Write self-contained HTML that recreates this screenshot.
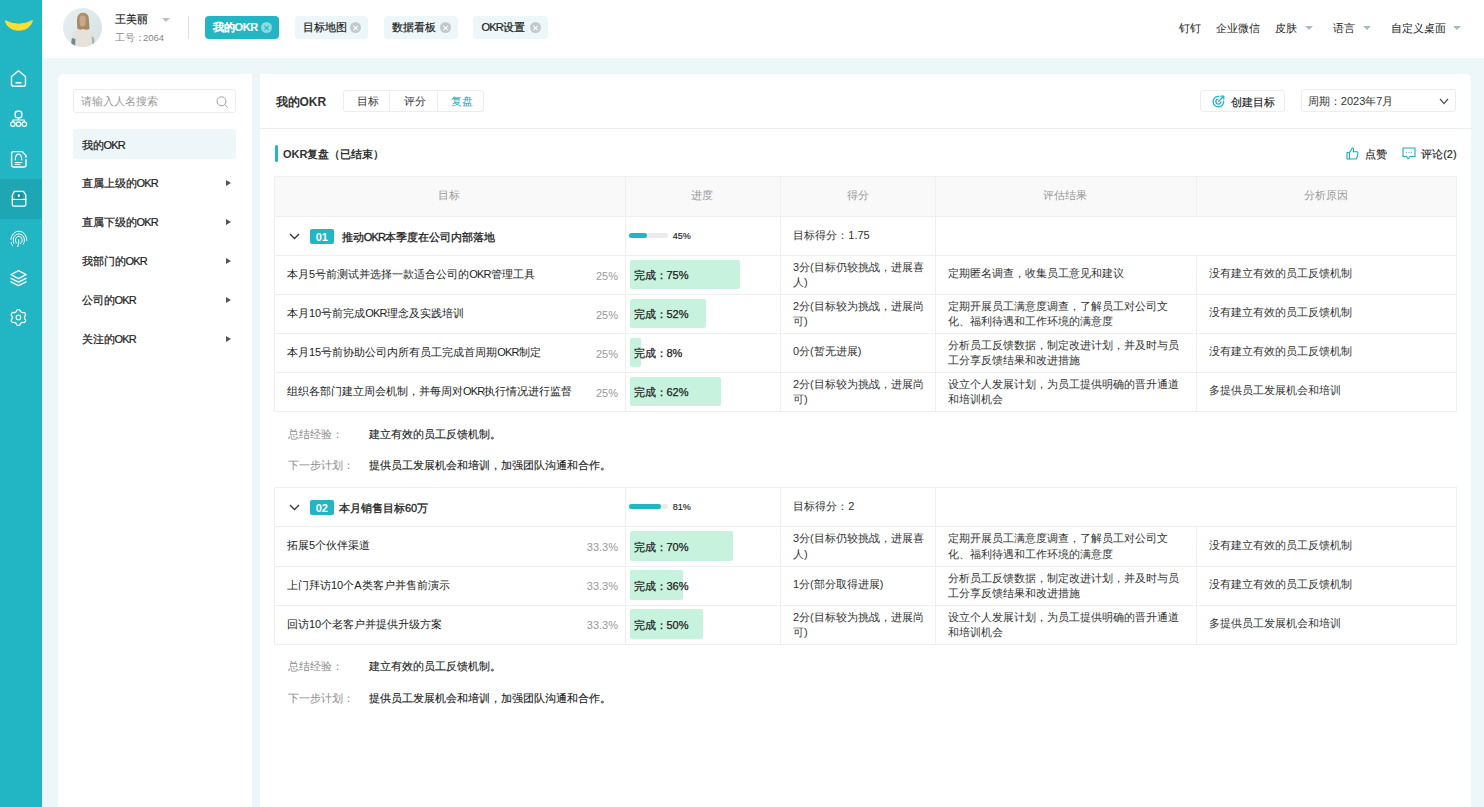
<!DOCTYPE html>
<html><head><meta charset="utf-8">
<style>
*{box-sizing:border-box;margin:0;padding:0}
html,body{width:1484px;height:807px;overflow:hidden}
body{position:relative;background:#edf6f8;font-family:"Liberation Sans",sans-serif;font-size:11px;color:#333}
.a{position:absolute;white-space:nowrap}
#side{position:absolute;left:0;top:0;width:42px;height:807px;background:#22b5c4}
#side .act{position:absolute;left:0;top:179px;width:42px;height:40px;background:#1fa6b4}
#side svg{position:absolute}
#hdr{position:absolute;left:42px;top:0;width:1442px;height:58px;background:#fff}
.tab{position:absolute;top:16px;height:23px;border-radius:4px;background:#edf6f8;color:#222;-webkit-text-stroke:0.2px #222;font-size:11px;line-height:23px}
.tab.on{background:#22b5c4;color:#fff;font-weight:bold;-webkit-text-stroke:0.1px #fff}
.tab .x{position:absolute;top:6px;width:11px;height:11px;border-radius:50%;background:#c4c9cb}
.tab.on .x{background:#8fd9e0}
.tab .x:before,.tab .x:after{content:"";position:absolute;left:5px;top:2.5px;width:1.2px;height:6px;background:#fff;transform:rotate(45deg)}
.tab .x:after{transform:rotate(-45deg)}
.tab.on .x:before,.tab.on .x:after{background:#22b5c4}
.tri{position:absolute;width:0;height:0;border-left:4px solid transparent;border-right:4px solid transparent;border-top:4.5px solid #a8bcbf}
#lp{position:absolute;left:57.7px;top:73.6px;width:194.3px;height:760px;background:#fff;border-radius:5px 0 0 0}
#mp{position:absolute;left:259.7px;top:73.6px;width:1211.6px;height:760px;background:#fff;border-radius:0 5px 0 0}
.menu{position:absolute;left:81.5px;font-size:11px;color:#333}
.rarr{position:absolute;left:226px;width:0;height:0;border-top:3.5px solid transparent;border-bottom:3.5px solid transparent;border-left:5px solid #555}
.ln{position:absolute;background:#efefef}
.hd{position:absolute;color:#999;font-size:11px;text-align:center}
.g{position:absolute;background:#c6f2de;border-radius:2px}
.t{position:absolute;white-space:nowrap;font-size:11px;color:#222;line-height:15.3px;}
.w{position:absolute;color:#999;font-size:11px;text-align:right;white-space:nowrap}
.badge{position:absolute;left:310px;width:23.5px;height:15.3px;background:#22b5c4;color:#fff;font-weight:bold;font-size:11px;line-height:17px;text-align:center;border-radius:2px}
.chev{position:absolute;left:288.8px}
.track{position:absolute;left:629px;width:39px;height:5px;border-radius:3px;background:#ebebeb}
.track i{position:absolute;left:0;top:0;height:5px;border-radius:3px;background:#22b5c4}
.sumk{position:absolute;left:287.5px;color:#8c8c8c;font-size:11px;white-space:nowrap}
.sumv{position:absolute;left:368.5px;color:#222;-webkit-text-stroke:0.12px #222;font-size:11px;white-space:nowrap}
</style></head><body>
<div id="side"><div class="act"></div><svg style="left:0;top:0" width="42" height="340" viewBox="0 0 42 340">
<path d="M5.3 20.8 Q18.7 27.8 32.4 20.5 C30.8 27.3 25 30.2 18.7 30.2 C12.5 30.2 7 27.3 5.3 20.8Z" fill="#fde02f" stroke="#fde02f" stroke-width="1" stroke-linejoin="round"/>
<g fill="none" stroke="#fff" stroke-width="1.4" stroke-linejoin="round" stroke-linecap="round">
<path d="M11.5 76.5 L18.5 70.7 L25.5 76.5 V84.3 Q25.5 86.3 23.5 86.3 H13.5 Q11.5 86.3 11.5 84.3Z"/>
<path d="M16 82.8 H21"/>
<rect x="15.2" y="111.2" width="6.6" height="6.6" rx="2.2"/>
<path d="M18.5 117.8 V120 M12.9 121.8 V120 H24.3 V121.8" stroke-width="1.2"/>
<circle cx="12.9" cy="124.1" r="2.3" stroke-width="1.2"/><circle cx="18.6" cy="124.1" r="2.3" stroke-width="1.2"/><circle cx="24.3" cy="124.1" r="2.3" stroke-width="1.2"/>
<path d="M26 159.8 V165.3 Q26 167 24.3 167 H13.3 Q11.6 167 11.6 165.3 V153.3 Q11.6 151.6 13.3 151.6 H22.3 L26 155.8 V157.3"/>
<path d="M15.3 159.8 Q15.5 154.2 18.5 154.2 Q21.5 154.2 21.8 159.8" stroke-width="1.2"/>
<path d="M15.2 162.5 H21.8 M15.2 164.3 H20" stroke-width="1"/>
<path d="M14.4 191.4 H23.5 L25.8 195 V204.6 Q25.8 206.2 24.2 206.2 H13.9 Q12.3 206.2 12.3 204.6 V195Z" stroke-width="1.3"/>
<path d="M12.3 199.4 H25.8" stroke-width="1.3"/>
<rect x="15.2" y="193.1" width="7.5" height="5.6" fill="#178f9b" stroke="none"/>
<ellipse cx="18.8" cy="195.6" rx="1.15" ry="1.7" fill="#fff" stroke="none"/>
<path d="M10.83 239.43 A8.00 8.80 0 0 1 26.80 240.51" stroke-width="1.0"/>
<path d="M13.86 243.33 A5.70 6.27 0 1 1 23.17 244.23" stroke-width="1.0"/>
<path d="M16.85 243.40 A3.40 3.91 0 1 1 20.24 243.74" stroke-width="1.0"/>
<path d="M12.67 245.86 A8.00 8.80 0 0 1 11.07 242.48" stroke-width="1.0"/>
<path d="M18.8 239.8 Q19.2 243.5 17.8 246.6" stroke-width="1"/>
<path d="M18.5 270.6 L26 274.6 L18.5 278.6 L11 274.6Z" stroke-width="1.3"/>
<path d="M11 278.3 L18.5 282.2 L26 278.3" stroke-width="1.3"/>
<path d="M11 281.8 L18.5 285.6 L26 281.8" stroke-width="1.3"/>
<path d="M24.55 317.50 L24.55 317.82 L24.54 318.15 L24.57 318.48 L24.74 318.85 L25.16 319.31 L25.55 319.82 L25.63 320.28 L25.55 320.68 L25.39 321.06 L25.20 321.43 L24.98 321.77 L24.73 322.10 L24.42 322.38 L23.98 322.53 L23.35 322.45 L22.74 322.32 L22.33 322.36 L22.03 322.50 L21.75 322.66 L21.48 322.83 L21.19 322.98 L20.91 323.14 L20.64 323.34 L20.40 323.67 L20.21 324.26 L19.96 324.85 L19.61 325.15 L19.22 325.28 L18.81 325.33 L18.40 325.35 L17.99 325.33 L17.58 325.28 L17.19 325.15 L16.84 324.85 L16.59 324.26 L16.40 323.67 L16.16 323.34 L15.89 323.14 L15.61 322.98 L15.32 322.83 L15.05 322.66 L14.77 322.50 L14.47 322.36 L14.06 322.32 L13.45 322.45 L12.82 322.53 L12.38 322.38 L12.07 322.10 L11.82 321.77 L11.60 321.43 L11.41 321.06 L11.25 320.68 L11.17 320.28 L11.25 319.82 L11.64 319.31 L12.06 318.85 L12.23 318.48 L12.26 318.15 L12.25 317.82 L12.25 317.50 L12.25 317.18 L12.26 316.85 L12.23 316.52 L12.06 316.15 L11.64 315.69 L11.25 315.18 L11.17 314.72 L11.25 314.32 L11.41 313.94 L11.60 313.57 L11.82 313.23 L12.07 312.90 L12.38 312.62 L12.82 312.47 L13.45 312.55 L14.06 312.68 L14.47 312.64 L14.77 312.50 L15.05 312.34 L15.32 312.17 L15.61 312.02 L15.89 311.86 L16.16 311.66 L16.40 311.33 L16.59 310.74 L16.84 310.15 L17.19 309.85 L17.58 309.72 L17.99 309.67 L18.40 309.65 L18.81 309.67 L19.22 309.72 L19.61 309.85 L19.96 310.15 L20.21 310.74 L20.40 311.33 L20.64 311.66 L20.91 311.86 L21.19 312.02 L21.48 312.17 L21.75 312.34 L22.03 312.50 L22.33 312.64 L22.74 312.68 L23.35 312.55 L23.98 312.47 L24.42 312.62 L24.73 312.90 L24.98 313.23 L25.20 313.57 L25.39 313.94 L25.55 314.32 L25.63 314.72 L25.55 315.18 L25.16 315.69 L24.74 316.15 L24.57 316.52 L24.54 316.85 L24.55 317.18Z" stroke-width="1.3"/>
<circle cx="18.4" cy="317.4" r="2.3" stroke-width="1.1"/>
</g></svg></div>
<div id="hdr"></div>
<div id="lp"></div>
<div id="mp"></div>
<svg class="a" style="left:63px;top:8px" width="39" height="39" viewBox="0 0 39 39"><defs><clipPath id="av"><circle cx="19.5" cy="19.5" r="19.5"/></clipPath><linearGradient id="bgG" x1="0" y1="0" x2="1" y2="1"><stop offset="0" stop-color="#e8eff1"/><stop offset="1" stop-color="#d6e2e6"/></linearGradient></defs><g clip-path="url(#av)"><rect width="39" height="39" fill="url(#bgG)"/><path d="M7 39 L9.5 26 Q11 22 15 21.5 L24.5 21.5 Q29 22 30 26 L32.5 39Z" fill="#e5e1db"/><path d="M7.5 39 L9 30 L12.5 31 L12 39Z" fill="#6f8b94"/><path d="M28.5 28 L31 30 L31.5 38 L29.5 36Z" fill="#9db3b9"/><path d="M14 13 Q13.5 5 20 4.8 Q26.5 5 26 13 L26.5 21 Q23 22.5 20 21 Q16.5 22.5 14.2 20.5Z" fill="#a88a60"/><path d="M16.5 10 Q17 7 20 7.2 Q22.8 7.5 22.8 11 L22.5 16.5 Q20.5 19.8 17.5 18 Q16 15 16.5 10Z" fill="#c7a78f"/><path d="M15.5 9 Q18 6 23.5 9 L23 6.5 Q20 4.5 16 6.5Z" fill="#b49465"/></g></svg>
<div class="a" style="left:114.5px;top:11px;font-size:11px;color:#222;-webkit-text-stroke:0.15px #222;line-height:16px">王美丽</div>
<div class="tri" style="left:161.5px;top:17.5px;border-top-color:#b9c0c2"></div>
<div class="a" style="left:114.5px;top:30.5px;font-size:9.5px;color:#888;line-height:14px">工号：<span style="margin-left:-1.5px">2064</span></div>
<div class="a" style="left:188px;top:15.5px;width:1px;height:23.5px;background:#dfe3e4"></div>
<div class="tab on" style="left:204.6px;width:74.1px"><span style="position:absolute;left:8px;top:0">我的<span style="letter-spacing:-0.4px">OKR</span></span><span class="x" style="left:56.1px"></span></div>
<div class="tab" style="left:294.7px;width:73.6px"><span style="position:absolute;left:8px;top:0">目标地图</span><span class="x" style="left:55.6px"></span></div>
<div class="tab" style="left:384px;width:73.7px"><span style="position:absolute;left:8px;top:0">数据看板</span><span class="x" style="left:55.7px"></span></div>
<div class="tab" style="left:473.4px;width:74.6px"><span style="position:absolute;left:8px;top:0"><span style="letter-spacing:-0.8px">OKR</span>设置</span><span class="x" style="left:56.6px"></span></div>
<div class="a" style="left:1178.5px;top:20px;font-size:11px;color:#222;line-height:16px">钉钉</div>
<div class="a" style="left:1216px;top:20px;font-size:11px;color:#222;line-height:16px">企业微信</div>
<div class="a" style="left:1274.7px;top:20px;font-size:11px;color:#222;line-height:16px">皮肤</div>
<div class="a" style="left:1332.5px;top:20px;font-size:11px;color:#222;line-height:16px">语言</div>
<div class="a" style="left:1390.7px;top:20px;font-size:11px;color:#222;line-height:16px">自定义桌面</div>
<div class="tri" style="left:1305.4px;top:25.5px"></div>
<div class="tri" style="left:1362.6px;top:25.5px"></div>
<div class="tri" style="left:1452.5px;top:25.5px"></div>
<div class="a" style="left:73.3px;top:89.4px;width:163.2px;height:23.2px;border:1px solid #ececec;border-radius:3px;background:#fff"></div>
<div class="a" style="left:80.5px;top:93px;font-size:11px;color:#999;line-height:16px">请输入人名搜索</div>
<svg class="a" style="left:216px;top:95.5px" width="13" height="12" viewBox="0 0 13 12" fill="none" stroke="#9a9fa1" stroke-width="1"><circle cx="5.5" cy="5.3" r="4.5"/><path d="M8.8 8.6 L11.8 11.5"/></svg>
<div class="a" style="left:73.3px;top:128.5px;width:163.2px;height:30.5px;border-radius:3px;background:#edf6f8"></div>
<div class="a" style="left:81.5px;top:137px;font-size:11px;color:#222;-webkit-text-stroke:0.22px #222;line-height:16px">我的<span style="letter-spacing:-0.8px">OKR</span></div>
<div class="a" style="left:81.5px;top:175px;font-size:11px;color:#222;-webkit-text-stroke:0.22px #222;line-height:16px">直属上级的<span style="letter-spacing:-0.8px">OKR</span></div>
<div class="rarr" style="top:179.5px"></div>
<div class="a" style="left:81.5px;top:214px;font-size:11px;color:#222;-webkit-text-stroke:0.22px #222;line-height:16px">直属下级的<span style="letter-spacing:-0.8px">OKR</span></div>
<div class="rarr" style="top:218.5px"></div>
<div class="a" style="left:81.5px;top:253px;font-size:11px;color:#222;-webkit-text-stroke:0.22px #222;line-height:16px">我部门的<span style="letter-spacing:-0.8px">OKR</span></div>
<div class="rarr" style="top:257.5px"></div>
<div class="a" style="left:81.5px;top:292px;font-size:11px;color:#222;-webkit-text-stroke:0.22px #222;line-height:16px">公司的<span style="letter-spacing:-0.8px">OKR</span></div>
<div class="rarr" style="top:296.5px"></div>
<div class="a" style="left:81.5px;top:331px;font-size:11px;color:#222;-webkit-text-stroke:0.22px #222;line-height:16px">关注的<span style="letter-spacing:-0.8px">OKR</span></div>
<div class="rarr" style="top:335.5px"></div>
<div class="a" style="left:275.5px;top:93px;font-size:12px;font-weight:bold;color:#333;line-height:18px">我的OKR</div>
<div class="a" style="left:343.3px;top:89.7px;width:140.4px;height:22.6px;border:1px solid #ededed;border-radius:3px"></div>
<div class="a" style="left:389px;top:90px;width:1px;height:22px;background:#ededed"></div>
<div class="a" style="left:437px;top:90px;width:1px;height:22px;background:#ededed"></div>
<div class="a" style="left:356.5px;top:93px;font-size:11px;color:#333;line-height:16px">目标</div>
<div class="a" style="left:404px;top:93px;font-size:11px;color:#333;line-height:16px">评分</div>
<div class="a" style="left:451.3px;top:93px;font-size:11px;color:#22a9b8;line-height:16px">复盘</div>
<div class="a" style="left:1200.2px;top:89.8px;width:84.6px;height:22.4px;border:1px solid #ededed;border-radius:3px"></div>
<svg class="a" style="left:1211.5px;top:94.5px" width="13" height="13" viewBox="0 0 13 13" fill="none" stroke="#22b5c4" stroke-width="1.3"><path d="M11.6 5.6 A5.3 5.3 0 1 1 7.4 1.4"/><path d="M8.9 6.6 A2.5 2.5 0 1 1 6.4 4.1"/><path d="M6.5 6.5 L10.5 2.5 M9 1.2 L11.8 1.2 M11.8 1.2 V4" stroke-linecap="round"/></svg>
<div class="a" style="left:1230.5px;top:93.5px;font-size:11px;color:#222;line-height:16px;-webkit-text-stroke:0.15px #222">创建目标</div>
<div class="a" style="left:1301px;top:89.4px;width:154.8px;height:22.8px;border:1px solid #ededed;border-radius:3px"></div>
<div class="a" style="left:1307.8px;top:92.5px;font-size:11px;color:#333;line-height:16px">周期：2023年7月</div>
<svg class="a" style="left:1438.5px;top:98px" width="10" height="7" viewBox="0 0 10 7" fill="none" stroke="#555" stroke-width="1.2"><path d="M1 1 L5 5.5 L9 1"/></svg>
<div class="ln" style="left:259.5px;top:127.8px;width:1212px;height:1px;background:#ebeeef"></div>
<div class="a" style="left:275px;top:144.7px;width:3.3px;height:17px;border-radius:2px;background:#22b5c4"></div>
<div class="a" style="left:283px;top:146px;font-size:11px;font-weight:bold;color:#333;line-height:16px">OKR复盘（已结束）</div>
<svg class="a" style="left:1346px;top:147px" width="13" height="13" viewBox="0 0 13 13" fill="none" stroke="#22a9b8" stroke-width="1.1" stroke-linejoin="round"><path d="M1 5.5 H3.5 V12 H1Z"/><path d="M3.5 5.5 L6.2 1 Q7.8 0.8 7.6 2.5 L7.2 4.8 H11 Q12.3 5 12 6.3 L10.8 11 Q10.5 12 9.5 12 H3.5"/></svg>
<div class="a" style="left:1365px;top:146px;font-size:11px;color:#222;line-height:16px;-webkit-text-stroke:0.15px #222">点赞</div>
<svg class="a" style="left:1401.5px;top:147px" width="14" height="13" viewBox="0 0 14 13" fill="none" stroke="#22a9b8" stroke-width="1.1" stroke-linejoin="round"><path d="M1 1 H13 V9.5 H8 L6 11.8 L4.5 9.5 H1Z"/><path d="M4 5.3 H4.8 M6.6 5.3 H7.4 M9.2 5.3 H10" stroke-width="1.2"/></svg>
<div class="a" style="left:1421.2px;top:146px;font-size:11px;color:#222;line-height:16px;-webkit-text-stroke:0.15px #222">评论(2)</div>
<div class="a" style="left:274.4px;top:176px;width:1181.8px;height:40px;background:#f9f9f9"></div>
<div class="hd" style="left:274.4px;width:350.2px;top:187px;line-height:16px">目标</div>
<div class="hd" style="left:624.6px;width:155.8px;top:187px;line-height:16px">进度</div>
<div class="hd" style="left:780.4px;width:154.8px;top:187px;line-height:16px">得分</div>
<div class="hd" style="left:935.2px;width:260.6px;top:187px;line-height:16px">评估结果</div>
<div class="hd" style="left:1195.8px;width:260.4px;top:187px;line-height:16px">分析原因</div>
<div class="ln" style="left:274.4px;top:176px;width:1182.8px;height:1px;background:#efefef"></div>
<div class="ln" style="left:274.4px;top:216px;width:1182.8px;height:1px;background:#efefef"></div>
<svg class="chev" style="top:233.0px" width="11" height="7" viewBox="0 0 11 7" fill="none" stroke="#333" stroke-width="1.3"><path d="M1 1 L5.5 5.5 L10 1"/></svg>
<div class="badge" style="top:228.6px">01</div>
<div class="t" style="left:341.8px;top:229.5px;-webkit-text-stroke:0.3px #222">推动<span style="letter-spacing:-0.8px">OKR</span>本季度在公司内部落地</div>
<div class="track" style="top:232.8px"><i style="width:17.6px"></i></div>
<div class="a" style="left:672.8px;top:229.7px;font-size:9px;color:#222;line-height:13px;-webkit-text-stroke:0.15px #222">45%</div>
<div class="t" style="left:793.3px;top:227.5px;color:#333;-webkit-text-stroke:0">目标得分：1.75</div>
<div class="ln" style="left:274.4px;top:255px;width:1182.8px;height:1px;background:#efefef"></div>
<div class="t" style="left:287px;top:267.0px;">本月5号前测试并选择一款适合公司的<span style="letter-spacing:-0.8px">OKR</span>管理工具</div>
<div class="w" style="left:540px;width:78px;top:267.5px;line-height:16px">25%</div>
<div class="g" style="left:629.6px;top:259.7px;width:110.8px;height:29.7px"></div>
<div class="t" style="left:633.5px;top:268.2px;color:#222;-webkit-text-stroke:0.25px #222">完成：75%</div>
<div class="t" style="left:793px;top:260.0px;color:#333;-webkit-text-stroke:0">3分(目标仍较挑战，进展喜<br>人)</div>
<div class="t" style="left:948.3px;top:266.45000000000005px;color:#333;-webkit-text-stroke:0">定期匿名调查，收集员工意见和建议</div>
<div class="t" style="left:1208.5px;top:266.45000000000005px;color:#333;-webkit-text-stroke:0">没有建立有效的员工反馈机制</div>
<div class="ln" style="left:274.4px;top:294px;width:1182.8px;height:1px;background:#efefef"></div>
<div class="t" style="left:287px;top:306.0px;">本月10号前完成<span style="letter-spacing:-0.8px">OKR</span>理念及实践培训</div>
<div class="w" style="left:540px;width:78px;top:306.5px;line-height:16px">25%</div>
<div class="g" style="left:629.6px;top:298.7px;width:76.8px;height:29.7px"></div>
<div class="t" style="left:633.5px;top:307.2px;color:#222;-webkit-text-stroke:0.25px #222">完成：52%</div>
<div class="t" style="left:793px;top:299.0px;color:#333;-webkit-text-stroke:0">2分(目标较为挑战，进展尚<br>可)</div>
<div class="t" style="left:948.3px;top:299.0px;color:#333;-webkit-text-stroke:0">定期开展员工满意度调查，了解员工对公司文<br>化、福利待遇和工作环境的满意度</div>
<div class="t" style="left:1208.5px;top:305.45000000000005px;color:#333;-webkit-text-stroke:0">没有建立有效的员工反馈机制</div>
<div class="ln" style="left:274.4px;top:333px;width:1182.8px;height:1px;background:#efefef"></div>
<div class="t" style="left:287px;top:345.0px;">本月15号前协助公司内所有员工完成首周期<span style="letter-spacing:-0.8px">OKR</span>制定</div>
<div class="w" style="left:540px;width:78px;top:345.5px;line-height:16px">25%</div>
<div class="g" style="left:629.6px;top:337.7px;width:11.8px;height:29.7px"></div>
<div class="t" style="left:633.5px;top:346.2px;color:#222;-webkit-text-stroke:0.25px #222">完成：8%</div>
<div class="t" style="left:793px;top:344.45000000000005px;color:#333;-webkit-text-stroke:0">0分(暂无进展)</div>
<div class="t" style="left:948.3px;top:338.0px;color:#333;-webkit-text-stroke:0">分析员工反馈数据，制定改进计划，并及时与员<br>工分享反馈结果和改进措施</div>
<div class="t" style="left:1208.5px;top:344.45000000000005px;color:#333;-webkit-text-stroke:0">没有建立有效的员工反馈机制</div>
<div class="ln" style="left:274.4px;top:372px;width:1182.8px;height:1px;background:#efefef"></div>
<div class="t" style="left:287px;top:384.0px;">组织各部门建立周会机制，并每周对<span style="letter-spacing:-0.8px">OKR</span>执行情况进行监督</div>
<div class="w" style="left:540px;width:78px;top:384.5px;line-height:16px">25%</div>
<div class="g" style="left:629.6px;top:376.7px;width:91.6px;height:29.7px"></div>
<div class="t" style="left:633.5px;top:385.2px;color:#222;-webkit-text-stroke:0.25px #222">完成：62%</div>
<div class="t" style="left:793px;top:377.0px;color:#333;-webkit-text-stroke:0">2分(目标较为挑战，进展尚<br>可)</div>
<div class="t" style="left:948.3px;top:377.0px;color:#333;-webkit-text-stroke:0">设立个人发展计划，为员工提供明确的晋升通道<br>和培训机会</div>
<div class="t" style="left:1208.5px;top:383.45000000000005px;color:#333;-webkit-text-stroke:0">多提供员工发展机会和培训</div>
<div class="ln" style="left:274.4px;top:411px;width:1182.8px;height:1px;background:#efefef"></div>
<div class="ln" style="left:274.4px;top:176px;width:1px;height:236.0px"></div>
<div class="ln" style="left:1456.2px;top:176px;width:1px;height:236.0px"></div>
<div class="ln" style="left:624.6px;top:176px;width:1px;height:235.0px"></div>
<div class="ln" style="left:780.4px;top:176px;width:1px;height:235.0px"></div>
<div class="ln" style="left:935.2px;top:176px;width:1px;height:235.0px"></div>
<div class="ln" style="left:1195.8px;top:176px;width:1px;height:40.0px"></div>
<div class="ln" style="left:1195.8px;top:255px;width:1px;height:156.0px"></div>
<div class="sumk" style="top:425.6px;line-height:16px">总结经验：</div>
<div class="sumv" style="top:425.6px;line-height:16px">建立有效的员工反馈机制。</div>
<div class="sumk" style="top:456.9px;line-height:16px">下一步计划：</div>
<div class="sumv" style="top:456.9px;line-height:16px">提供员工发展机会和培训，加强团队沟通和合作。</div>
<div class="ln" style="left:274.4px;top:487.4px;width:1182.8px;height:1px;background:#efefef"></div>
<svg class="chev" style="top:504.4px" width="11" height="7" viewBox="0 0 11 7" fill="none" stroke="#333" stroke-width="1.3"><path d="M1 1 L5.5 5.5 L10 1"/></svg>
<div class="badge" style="top:500.0px">02</div>
<div class="t" style="left:339px;top:500.92499999999995px;-webkit-text-stroke:0.3px #222">本月销售目标60万</div>
<div class="track" style="top:504.2px"><i style="width:31.6px"></i></div>
<div class="a" style="left:672.8px;top:501.1px;font-size:9px;color:#222;line-height:13px;-webkit-text-stroke:0.15px #222">81%</div>
<div class="t" style="left:793.3px;top:498.92499999999995px;color:#333;-webkit-text-stroke:0">目标得分：2</div>
<div class="ln" style="left:274.4px;top:526.4499999999999px;width:1182.8px;height:1px;background:#efefef"></div>
<div class="t" style="left:287px;top:538.4749999999999px;">拓展5个伙伴渠道</div>
<div class="w" style="left:540px;width:78px;top:539.0px;line-height:16px">33.3%</div>
<div class="g" style="left:629.6px;top:531.1px;width:103.4px;height:29.7px"></div>
<div class="t" style="left:633.5px;top:539.675px;color:#222;-webkit-text-stroke:0.25px #222">完成：70%</div>
<div class="t" style="left:793px;top:531.4749999999999px;color:#333;-webkit-text-stroke:0">3分(目标仍较挑战，进展喜<br>人)</div>
<div class="t" style="left:948.3px;top:531.4749999999999px;color:#333;-webkit-text-stroke:0">定期开展员工满意度调查，了解员工对公司文<br>化、福利待遇和工作环境的满意度</div>
<div class="t" style="left:1208.5px;top:537.925px;color:#333;-webkit-text-stroke:0">没有建立有效的员工反馈机制</div>
<div class="ln" style="left:274.4px;top:565.4999999999999px;width:1182.8px;height:1px;background:#efefef"></div>
<div class="t" style="left:287px;top:577.5249999999999px;">上门拜访10个A类客户并售前演示</div>
<div class="w" style="left:540px;width:78px;top:578.0px;line-height:16px">33.3%</div>
<div class="g" style="left:629.6px;top:570.2px;width:53.2px;height:29.7px"></div>
<div class="t" style="left:633.5px;top:578.7249999999999px;color:#222;-webkit-text-stroke:0.25px #222">完成：36%</div>
<div class="t" style="left:793px;top:576.9749999999999px;color:#333;-webkit-text-stroke:0">1分(部分取得进展)</div>
<div class="t" style="left:948.3px;top:570.5249999999999px;color:#333;-webkit-text-stroke:0">分析员工反馈数据，制定改进计划，并及时与员<br>工分享反馈结果和改进措施</div>
<div class="t" style="left:1208.5px;top:576.9749999999999px;color:#333;-webkit-text-stroke:0">没有建立有效的员工反馈机制</div>
<div class="ln" style="left:274.4px;top:604.5499999999998px;width:1182.8px;height:1px;background:#efefef"></div>
<div class="t" style="left:287px;top:616.5749999999998px;">回访10个老客户并提供升级方案</div>
<div class="w" style="left:540px;width:78px;top:617.1px;line-height:16px">33.3%</div>
<div class="g" style="left:629.6px;top:609.2px;width:73.8px;height:29.7px"></div>
<div class="t" style="left:633.5px;top:617.7749999999999px;color:#222;-webkit-text-stroke:0.25px #222">完成：50%</div>
<div class="t" style="left:793px;top:609.5749999999998px;color:#333;-webkit-text-stroke:0">2分(目标较为挑战，进展尚<br>可)</div>
<div class="t" style="left:948.3px;top:609.5749999999998px;color:#333;-webkit-text-stroke:0">设立个人发展计划，为员工提供明确的晋升通道<br>和培训机会</div>
<div class="t" style="left:1208.5px;top:616.0249999999999px;color:#333;-webkit-text-stroke:0">多提供员工发展机会和培训</div>
<div class="ln" style="left:274.4px;top:643.5999999999998px;width:1182.8px;height:1px;background:#efefef"></div>
<div class="ln" style="left:274.4px;top:487.4px;width:1px;height:157.2px"></div>
<div class="ln" style="left:1456.2px;top:487.4px;width:1px;height:157.2px"></div>
<div class="ln" style="left:624.6px;top:487.4px;width:1px;height:156.2px"></div>
<div class="ln" style="left:780.4px;top:487.4px;width:1px;height:156.2px"></div>
<div class="ln" style="left:935.2px;top:487.4px;width:1px;height:156.2px"></div>
<div class="ln" style="left:1195.8px;top:526.4499999999999px;width:1px;height:117.1px"></div>
<div class="sumk" style="top:658.2px;line-height:16px">总结经验：</div>
<div class="sumv" style="top:658.2px;line-height:16px">建立有效的员工反馈机制。</div>
<div class="sumk" style="top:689.5px;line-height:16px">下一步计划：</div>
<div class="sumv" style="top:689.5px;line-height:16px">提供员工发展机会和培训，加强团队沟通和合作。</div>
</body></html>
